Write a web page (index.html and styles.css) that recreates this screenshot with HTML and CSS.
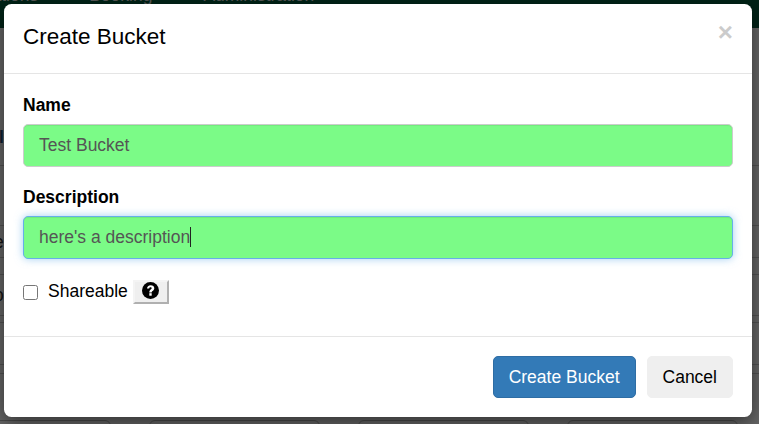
FILE: index.html
```html
<!DOCTYPE html>
<html lang="en">
<head>
<meta charset="utf-8">
<title>Create Bucket</title>
<link rel="stylesheet" href="styles.css">
</head>
<body>
<div class="page">
  <nav class="topnav">
    <span class="nav-item nav-first">Reservations</span>
    <span class="nav-item">Booking</span>
    <span class="nav-item">Administration</span>
  </nav>
  <div class="page-body">
    <div class="rows">
      <div class="row row-a"><span class="row-text row-link">l</span></div>
      <div class="row row-b"></div>
      <div class="row row-c"><span class="row-text">e</span></div>
      <div class="row row-d"></div>
      <div class="row row-e"><span class="row-text">o</span></div>
      <div class="row row-f"></div>
      <div class="row row-g"><span class="row-text">f</span></div>
      <div class="row row-h"></div>
    </div>
    <div class="cards">
      <div class="card"></div>
      <div class="card"></div>
      <div class="card"></div>
      <div class="card"></div>
    </div>
  </div>
</div>
<div class="backdrop"></div>
<div class="modal">
  <header class="modal-header">
    <h4 class="modal-title">Create Bucket</h4>
    <span class="close">×</span>
  </header>
  <div class="modal-body">
    <div class="form-group">
      <label class="field-label">Name</label>
      <div class="field">Test Bucket</div>
    </div>
    <div class="form-group">
      <label class="field-label">Description</label>
      <div class="field field-focus">here's a description<span class="caret"></span></div>
    </div>
    <div class="check-row">
      <span class="checkbox"></span>
      <span class="check-label">Shareable</span>
      <span class="help-btn">
        <svg class="help-icon" viewBox="0 0 17 17" aria-hidden="true">
          <circle cx="8.5" cy="8.5" r="8.5" fill="#000"/>
          <path d="M5 6.6C5.1 4.5 6.5 3.2 8.6 3.2c2.2 0 3.7 1.2 3.7 3 0 1.3-.7 2-1.7 2.7-.7.5-.9.8-.9 1.5H7.3c0-1.5.5-2.2 1.4-2.9.7-.5 1-.8 1-1.2 0-.6-.5-1-1.2-1-.8 0-1.2.5-1.3 1.3Z" fill="#fff"/>
          <rect x="7.3" y="11.2" width="2.4" height="2.5" fill="#fff"/>
        </svg>
      </span>
    </div>
  </div>
  <footer class="modal-footer">
    <span class="btn btn-primary">Create Bucket</span>
    <span class="btn btn-default">Cancel</span>
  </footer>
</div>
</body>
</html>
```
FILE: styles.css
```css
* { box-sizing: border-box; }
html, body { margin: 0; padding: 0; height: 100%; overflow: hidden; }
body { font-family: "Liberation Sans", Arial, sans-serif; font-size: 17.5px; color: #000; background: #fff; }
.page { height: 424px; display: flex; flex-direction: column; overflow: hidden; }
.topnav { height: 28px; flex: none; background: #00573a; color: #ddd; display: flex; gap: 51px; line-height: 1; overflow: hidden; }
.nav-item { margin-top: -13px; white-space: nowrap; }
.nav-first { margin-left: -64px; }
.page-body { flex: 1; display: flex; flex-direction: column; min-height: 0; }
.rows { flex: none; }
.row { border-bottom: 1px solid #ccc; display: flex; align-items: center; overflow: hidden; }
.row-a { height: 138px; align-items: flex-end; padding-bottom: 18px; }
.row-b { height: 60px; }
.row-c { height: 32px; }
.row-d { height: 17px; }
.row-e { height: 41px; }
.row-f { height: 7px; }
.row-g { height: 42px; }
.row-h { height: 9px; }
.row-text { margin-left: -6px; line-height: 20px; color: #333; }
.row-link { color: #23527c; font-weight: 700; margin-left: -1px; }
.cards { display: flex; gap: 38px; margin-left: -60px; margin-top: 46px; }
.card { width: 171px; height: 20px; flex: none; border: 1px solid #bbb; border-radius: 6px; }
.backdrop { position: absolute; inset: 0; background: rgba(0,0,0,.6); }
.modal { position: absolute; left: 4px; top: 4px; width: 748px; height: 413px; background: #fff; border-radius: 7.5px; box-shadow: 0 6px 19px rgba(0,0,0,.5); display: flex; flex-direction: column; }
.modal-header { height: 70px; border-bottom: 1px solid #e5e5e5; padding: 18px 19px 0; display: flex; justify-content: space-between; }
.modal-title { margin: 0; font-size: 22.5px; font-weight: 400; line-height: 30px; }
.close { font-size: 26px; font-weight: 700; color: #000; opacity: .2; line-height: 20px; }
.modal-body { flex: 1; padding: 19px 19px 0; }
.form-group { margin-bottom: 18.5px; }
.field-label { display: block; font-weight: 700; line-height: 25px; margin-bottom: 6px; }
.field { height: 42.5px; background: #7bfb87; border: 1px solid #ccc; border-radius: 5px; padding: 0 15px; line-height: 40px; color: #555; box-shadow: inset 0 1px 1px rgba(0,0,0,.075); }
.field-focus { border-color: #66afe9; box-shadow: inset 0 1px 1px rgba(0,0,0,.075), 0 0 8px rgba(102,175,233,.6); display: flex; align-items: center; }
.caret { display: inline-block; width: 1px; height: 20px; background: #222; }
.check-row { display: flex; align-items: center; height: 24px; margin-top: 21px; }
.checkbox { width: 15px; height: 15px; margin-top: 1px; border: 1px solid #767676; border-radius: 2.5px; background: #fff; }
.check-label { margin-left: 10px; }
.help-btn { margin-left: 5px; width: 36px; height: 24px; background: #efefef; border: 2px solid; border-color: #f4f4f4 #b0b0b0 #b0b0b0 #f4f4f4; display: flex; align-items: center; justify-content: center; }
.help-icon { width: 17px; height: 17px; display: block; margin-top: -3px; }
.modal-footer { height: 81px; border-top: 1px solid #e5e5e5; padding: 19px 19px 0; display: flex; justify-content: flex-end; gap: 11px; }
.btn { height: 42px; line-height: 40px; border: 1px solid transparent; border-radius: 5px; padding: 0 15px; text-align: center; }
.btn-primary { background: #337ab7; border-color: #2e6da4; color: #fff; }
.btn-default { background: #efefef; border-color: #efefef; color: #000; }
```
